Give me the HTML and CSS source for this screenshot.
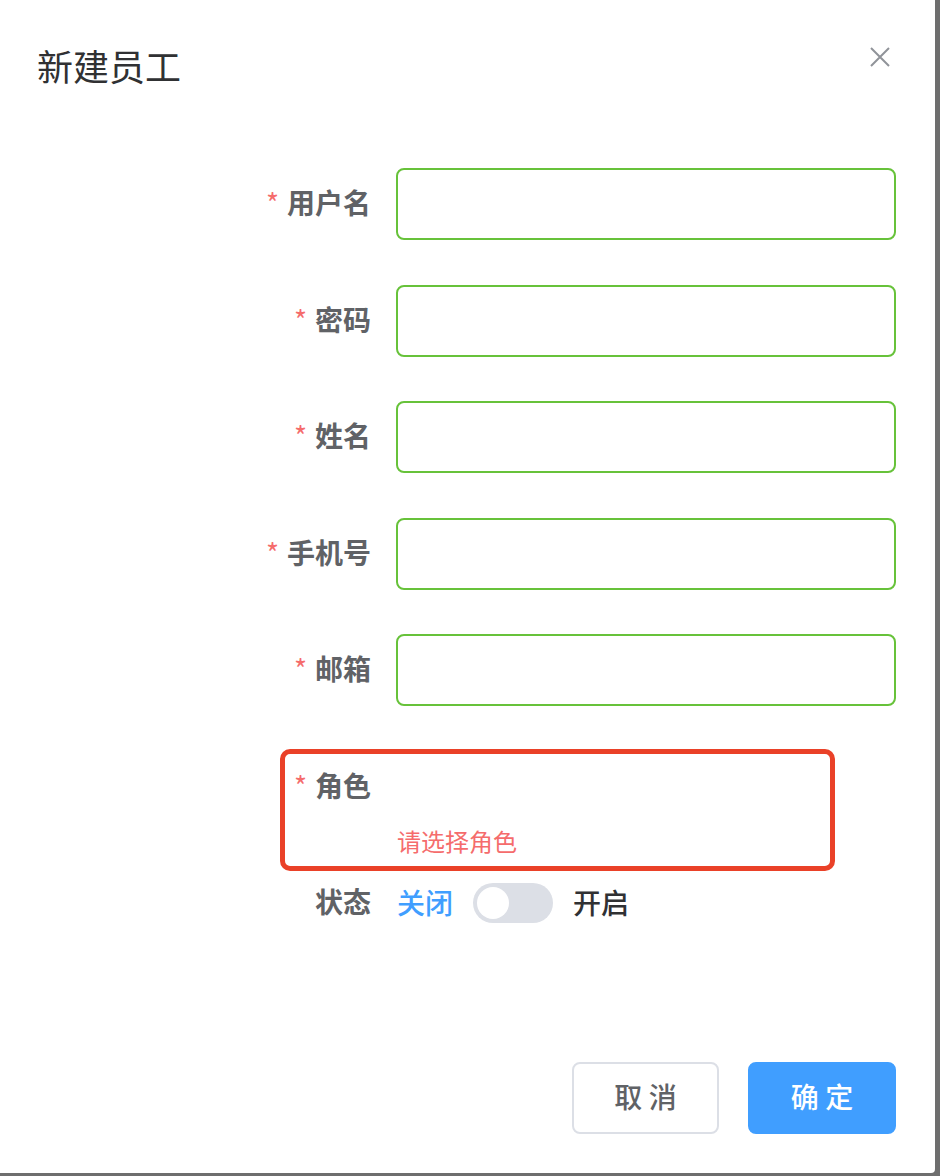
FILE: index.html
```html
<!DOCTYPE html>
<html lang="zh-CN">
<head>
<meta charset="utf-8">
<title>新建员工</title>
<link rel="stylesheet" href="styles.css">
</head>
<body>
<div class="dialog">
  <div class="dialog-header">
    <span class="dialog-title">新建员工</span>
    <button class="dialog-close" aria-label="关闭">
      <svg width="22" height="22" viewBox="0 0 22 22"><path d="M2 2 L20 20 M20 2 L2 20" stroke="#909399" stroke-width="2" fill="none"/></svg>
    </button>
  </div>
  <div class="dialog-body">
    <form class="form">
      <div class="form-item">
        <label class="form-label required">用户名</label>
        <div class="form-content"><input class="input" type="text"></div>
      </div>
      <div class="form-item">
        <label class="form-label required">密码</label>
        <div class="form-content"><input class="input" type="password"></div>
      </div>
      <div class="form-item">
        <label class="form-label required">姓名</label>
        <div class="form-content"><input class="input" type="text"></div>
      </div>
      <div class="form-item">
        <label class="form-label required">手机号</label>
        <div class="form-content"><input class="input" type="text"></div>
      </div>
      <div class="form-item">
        <label class="form-label required">邮箱</label>
        <div class="form-content"><input class="input" type="text"></div>
      </div>
      <div class="form-item form-item-error">
        <label class="form-label required">角色</label>
        <div class="form-content">
          <div class="form-error">请选择角色</div>
        </div>
        <div class="highlight"></div>
      </div>
      <div class="form-item">
        <label class="form-label">状态</label>
        <div class="form-content switch-wrap">
          <span class="switch-label active">关闭</span>
          <span class="switch"><span class="switch-knob"></span></span>
          <span class="switch-label">开启</span>
        </div>
      </div>
    </form>
  </div>
  <div class="dialog-footer">
    <button class="btn btn-default" type="button">取 消</button>
    <button class="btn btn-primary" type="button">确 定</button>
  </div>
</div>
</body>
</html>
```

FILE: styles.css
```css
* { box-sizing: border-box; }
html, body { margin: 0; padding: 0; }
body {
  background: #6e6e6e;
  font-family: "Noto Sans CJK SC", "Noto Sans", "Liberation Sans", sans-serif;
  width: 940px;
  height: 1176px;
  overflow: hidden;
}
.dialog {
  width: 935px;
  height: 1173px;
  background: #ffffff;
  border-bottom-right-radius: 4px;
  display: flex;
  flex-direction: column;
}
.dialog-header {
  display: flex;
  justify-content: space-between;
  align-items: center;
  padding: 40px 44px 0 37px;
  height: 89px;
}
.dialog-title {
  font-size: 36px;
  line-height: 48px;
  color: #303133;
}
.dialog-close {
  border: 0;
  background: transparent;
  padding: 0;
  width: 22px;
  height: 22px;
  margin-top: -16px;
  display: flex;
}
.dialog-body {
  padding-top: 79px;
  flex: 1;
}
.form-item {
  position: relative;
  display: grid;
  grid-template-columns: 396px 500px;
  height: 72px;
  margin-bottom: 44.5px;
}
.form-label {
  display: flex;
  align-items: center;
  justify-content: flex-end;
  padding-right: 25px;
  padding-bottom: 4px;
  font-size: 28px;
  font-weight: 600;
  color: #606266;
}
.form-label.required::before {
  content: "*";
  color: #f56c6c;
  margin-right: 8px;
  font-size: 28px;
  font-weight: 400;
}
.form-content {
  position: relative;
  display: flex;
  align-items: center;
}
.input {
  width: 500px;
  height: 72px;
  border: 2px solid #67c23a;
  border-radius: 8px;
  outline: none;
  background: #fff;
  padding: 0 30px;
  font-size: 28px;
  font-family: inherit;
}
.form-error {
  position: absolute;
  left: 1px;
  top: 100%;
  padding-top: 6px;
  font-size: 24px;
  line-height: 24px;
  color: #f56c6c;
}
.highlight {
  position: absolute;
  left: 280px;
  top: -1.5px;
  width: 555px;
  height: 122px;
  border: 5px solid #ea4128;
  border-radius: 10px;
  pointer-events: none;
}
.switch-wrap {
  gap: 20px;
  padding-left: 1px;
}
.switch-label {
  font-size: 28px;
  font-weight: 500;
  color: #303133;
  margin-top: -3px;
}
.switch-label.active { color: #409eff; }
.switch {
  position: relative;
  display: inline-block;
  width: 80px;
  height: 40px;
  border-radius: 20px;
  background: #dcdfe6;
}
.switch-knob {
  position: absolute;
  left: 4px;
  top: 4px;
  width: 32px;
  height: 32px;
  border-radius: 50%;
  background: #fff;
}
.dialog-footer {
  display: flex;
  justify-content: flex-end;
  gap: 29px;
  padding: 0 39px 39px 0;
}
.btn {
  height: 72px;
  border-radius: 8px;
  font-size: 28px;
  font-weight: 500;
  font-family: inherit;
  padding: 0 0 4px;
  cursor: pointer;
}
.btn-default {
  width: 147px;
  border: 2px solid #dcdfe6;
  background: #fff;
  color: #606266;
}
.btn-primary {
  width: 148px;
  border: 2px solid #409eff;
  background: #409eff;
  color: #fff;
}
```
